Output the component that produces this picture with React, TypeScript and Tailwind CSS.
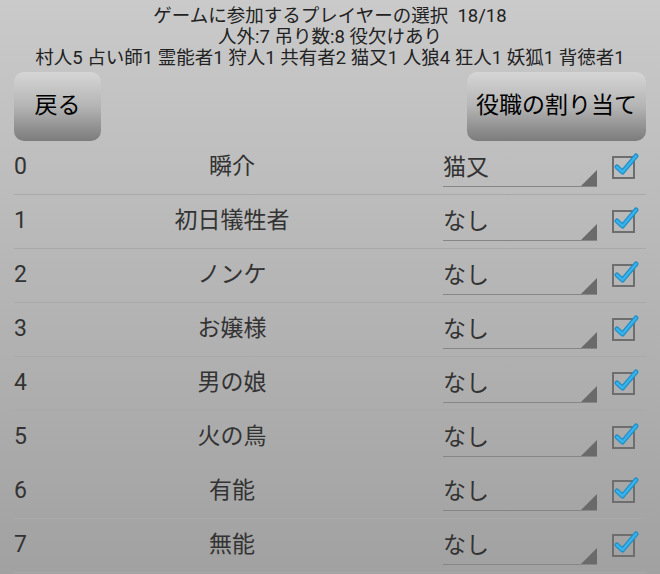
const players = [
  { id: 0, name: "瞬介", role: "猫又" },
  { id: 1, name: "初日犠牲者", role: "なし" },
  { id: 2, name: "ノンケ", role: "なし" },
  { id: 3, name: "お嬢様", role: "なし" },
  { id: 4, name: "男の娘", role: "なし" },
  { id: 5, name: "火の鳥", role: "なし" },
  { id: 6, name: "有能", role: "なし" },
  { id: 7, name: "無能", role: "なし" },
]

function CheckBox() {
  return (
    <svg width="30" height="30" viewBox="0 0 30 30" className="block">
      <rect x="1" y="7" width="21" height="21" fill="none" stroke="#6e6e6e" strokeWidth="2" />
      <path d="M5 17 L10.5 22 L24 6" fill="none" stroke="#1f8fc8" strokeWidth="5" strokeLinecap="round" strokeLinejoin="round" />
      <path d="M5 17 L10.5 22 L24 6" fill="none" stroke="#38b2ea" strokeWidth="2.5" strokeLinecap="round" strokeLinejoin="round" />
    </svg>
  )
}

function Spinner({ value }: { value: string }) {
  return (
    <div className="relative h-[46px] w-[154px] border-b border-[#868686]">
      <div className="pt-[14px] text-[23px] leading-[26px] text-[#333]">{value}</div>
      <svg width="16" height="16" viewBox="0 0 16 16" className="absolute bottom-0 right-0">
        <polygon points="16,0 16,16 0,16" fill="#6a6a6a" />
      </svg>
    </div>
  )
}

export default function App() {
  return (
    <div
      className="h-[574px] w-[660px] overflow-hidden bg-gradient-to-b from-[#cacaca] to-[#a1a1a1] text-[#222]"
      style={{ fontFamily: 'Roboto, "Noto Sans CJK JP", sans-serif' }}
    >
      <div className="pt-[6px] text-center text-[18.5px] leading-[21px] text-[#222]">
        <p>ゲームに参加するプレイヤーの選択&nbsp; 18/18</p>
        <p>人外:7 吊り数:8 役欠けあり</p>
        <p>村人5 占い師1 霊能者1 狩人1 共有者2 猫又1 人狼4 狂人1 妖狐1 背徳者1</p>
      </div>

      <div className="mt-[3px] flex justify-between px-[14px]">
        <button className="h-[69px] w-[87px] rounded-[10px] bg-gradient-to-b from-[#d6d6d6] via-[#b4b4b4] to-[#7c7c7c] text-[23px] text-black">
          戻る
        </button>
        <button className="h-[69px] w-[179px] rounded-[10px] bg-gradient-to-b from-[#d6d6d6] via-[#b4b4b4] to-[#7c7c7c] text-[23px] text-black">
          役職の割り当て
        </button>
      </div>

      <div className="px-[14px]">
        {players.map((p) => (
          <div key={p.id} className="flex h-[54px] items-center border-b border-[#a9a9a9]">
            <div className="w-[30px] text-[23px] text-[#333]">{p.id}</div>
            <div className="w-[376px] text-center text-[23px] text-[#333]">{p.name}</div>
            <div className="ml-[23px] self-start">
              <Spinner value={p.role} />
            </div>
            <div className="ml-[15px] -mt-[6px]">
              <CheckBox />
            </div>
          </div>
        ))}
      </div>
    </div>
  )
}
